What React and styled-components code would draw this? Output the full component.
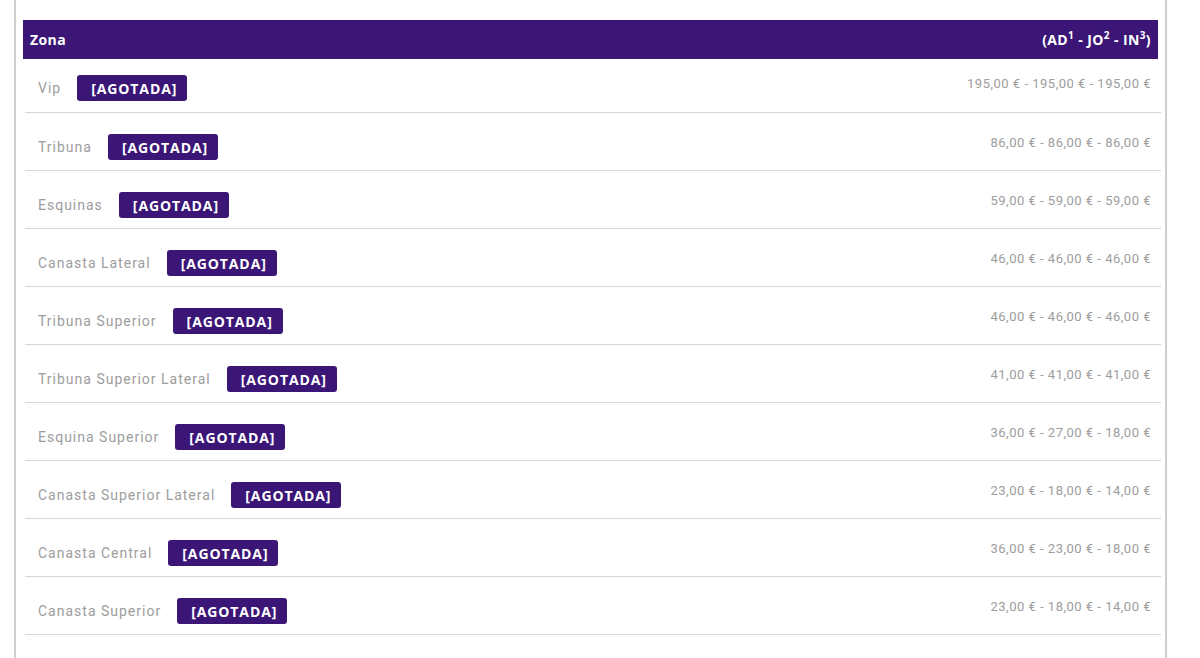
import React from 'react';
import styled, { createGlobalStyle } from 'styled-components';

const GlobalStyle = createGlobalStyle`
    body{
        margin:0;
        background-color:#ffffff;
        font-family:Roboto, "Liberation Sans", sans-serif;
    }
`;

const COLORS = {
    purple: '#3b1677',
    text: '#9d9d9d',
    line: '#d6d6d6',
    border: '#cfcfcf',
};

const Wrapper = styled.div`
    margin-left:14px;
    width:1153px;
    height:658px;
    box-sizing:border-box;
    border-left:2px solid ${COLORS.border};
    border-right:2px solid ${COLORS.border};
    padding:20px 7px 0 7px;
    overflow:hidden;
`;

const Header = styled.div`
    height:39px;
    background-color:${COLORS.purple};
    display:flex;
    justify-content:space-between;
    align-items:center;
    padding:0 7px;
    color:white;
    font-family:"Open Sans", sans-serif;
    font-weight:700;
    font-size:14px;
    letter-spacing:0.4px;

    sup{
        font-size:10px;
        line-height:0;
        vertical-align:6px;
    }
`;

const List = styled.div`
    margin:0 -3px 0 2px;
`;

const Row = styled.div`
    height:58px;
    box-sizing:border-box;
    border-bottom:1px solid ${COLORS.line};
    display:flex;
    justify-content:space-between;
    align-items:flex-start;
    padding:21px 10px 0 13px;

    &:first-child{
        height:54px;
        padding-top:16px;
    }
`;

const Zone = styled.div`
    display:flex;
    align-items:center;
    gap:16px;
`;

const Name = styled.span`
    color:${COLORS.text};
    font-size:14px;
    letter-spacing:1px;
`;

const Badge = styled.span`
    display:inline-flex;
    align-items:center;
    height:26px;
    padding:0 10px 0 14px;
    border-radius:3px;
    background-color:${COLORS.purple};
    color:white;
    font-family:"Open Sans", sans-serif;
    font-weight:700;
    font-size:14px;
    letter-spacing:0.9px;
`;

const Price = styled.span`
    color:${COLORS.text};
    font-size:13px;
    letter-spacing:0.5px;
    margin-top:1px;
`;

const zones = [
    { name: 'Vip', prices: ['195,00', '195,00', '195,00'] },
    { name: 'Tribuna', prices: ['86,00', '86,00', '86,00'] },
    { name: 'Esquinas', prices: ['59,00', '59,00', '59,00'] },
    { name: 'Canasta Lateral', prices: ['46,00', '46,00', '46,00'] },
    { name: 'Tribuna Superior', prices: ['46,00', '46,00', '46,00'] },
    { name: 'Tribuna Superior Lateral', prices: ['41,00', '41,00', '41,00'] },
    { name: 'Esquina Superior', prices: ['36,00', '27,00', '18,00'] },
    { name: 'Canasta Superior Lateral', prices: ['23,00', '18,00', '14,00'] },
    { name: 'Canasta Central', prices: ['36,00', '23,00', '18,00'] },
    { name: 'Canasta Superior', prices: ['23,00', '18,00', '14,00'] },
];

const App = () => {
    return (
        <>
            <GlobalStyle />
            <Wrapper>
                <Header>
                    <span>Zona</span>
                    <span>(AD<sup>1</sup> - JO<sup>2</sup> - IN<sup>3</sup>)</span>
                </Header>
                <List>
                    {zones.map(z => (
                        <Row key={z.name}>
                            <Zone>
                                <Name>{z.name}</Name>
                                <Badge>[AGOTADA]</Badge>
                            </Zone>
                            <Price>{z.prices.map(p => p + ' €').join(' - ')}</Price>
                        </Row>
                    ))}
                </List>
            </Wrapper>
        </>
    )
}

export default App;
